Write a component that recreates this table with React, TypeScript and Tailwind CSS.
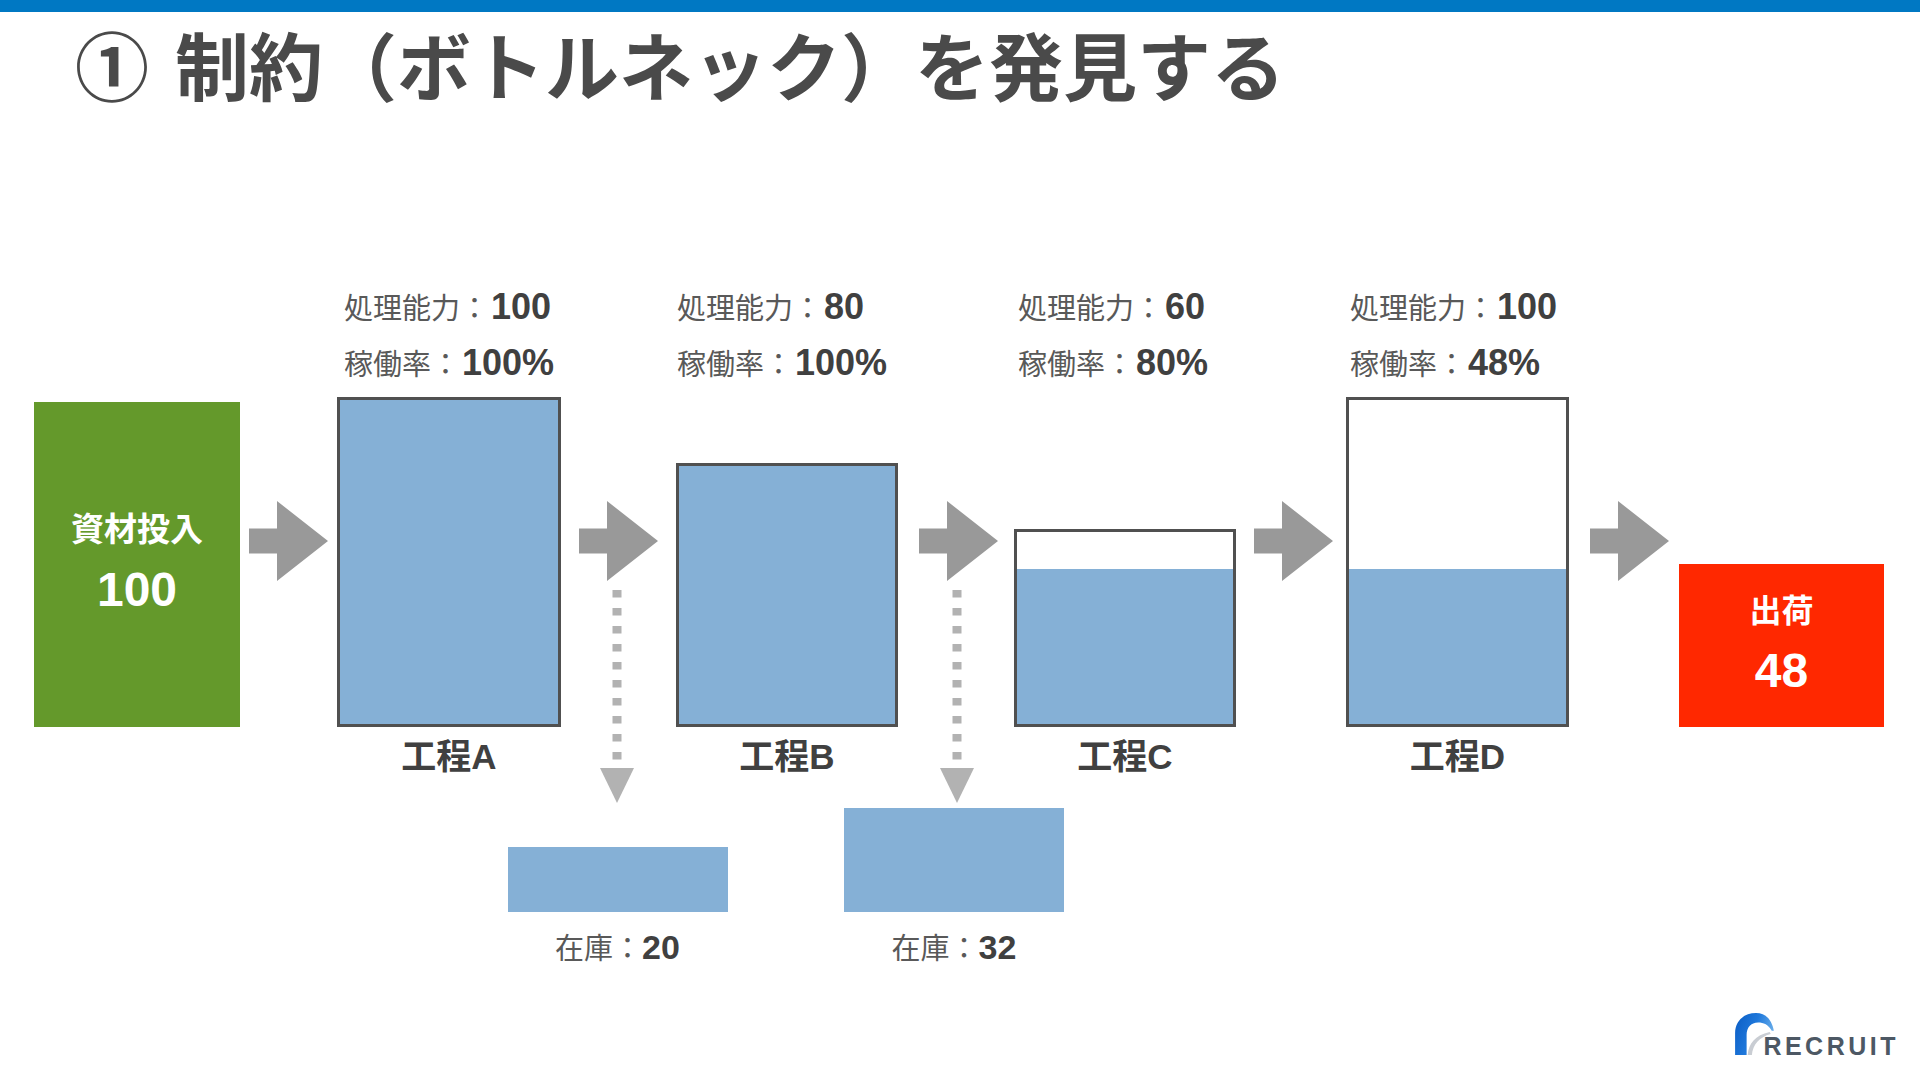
import React from "react";

const SCALE = 3.3;

function Arrow() {
  return (
    <svg width="79" height="80" viewBox="0 0 79 80" className="block shrink-0">
      <polygon points="0,27.5 28,27.5 28,0 79,40 28,80 28,52.5 0,52.5" fill="#999999" />
    </svg>
  );
}

function ArrowCol({ className, stock, boxClass }: { className: string; stock?: number; boxClass?: string }) {
  return (
    <div className={"flex flex-col items-center w-[79px] shrink-0 pt-[222px] " + className}>
      <Arrow />
      {stock !== undefined && (
        <>
          <svg width="10" height="170" viewBox="0 0 10 170" className="block mt-[9px] mr-[3px] shrink-0">
            <line x1="5" y1="0" x2="5" y2="170" stroke="#b2b2b2" strokeWidth="9" strokeDasharray="7.5 10.5" />
          </svg>
          <svg width="34" height="35" viewBox="0 0 34 35" className="block mt-[8px] mr-[3px] shrink-0">
            <polygon points="0,0 34,0 17,35" fill="#b2b2b2" />
          </svg>
          <div className={"h-[109px] flex flex-col justify-end items-center " + (boxClass ?? "")}>
            <div className="w-[220px] shrink-0 bg-[#85b0d6]" style={{ height: stock * 3.25 }} />
            <div className="mt-[15px] h-[40px] leading-[40px] whitespace-nowrap text-[#595959] font-['Liberation_Sans','Noto_Sans_CJK_JP',sans-serif] -mb-[55px]">
              <span className="text-[29px]">在庫：</span>
              <span className="text-[34px] font-bold text-[#404040]">{stock}</span>
            </div>
          </div>
        </>
      )}
    </div>
  );
}

function Process({
  className,
  labelClass,
  cap,
  rate,
  out,
  name,
}: {
  className: string;
  labelClass: string;
  cap: number;
  rate: number;
  out: number;
  name: string;
}) {
  const boxH = cap * SCALE;
  const inner = boxH - 6;
  const fillH = Math.min(out * SCALE - 3, inner);
  return (
    <div className={"flex flex-col shrink-0 " + className}>
      <div className="h-[448px] flex flex-col">
        <div className={"font-['Liberation_Sans','Noto_Sans_CJK_JP',sans-serif] text-[#595959] " + labelClass}>
          <div className="h-[56px] leading-[56px] whitespace-nowrap">
            <span className="text-[29px]">処理能力：</span>
            <span className="ml-[2px] text-[36px] font-bold text-[#404040]">{cap}</span>
          </div>
          <div className="h-[56px] leading-[56px] whitespace-nowrap">
            <span className="text-[29px]">稼働率：</span>
            <span className="ml-[2px] text-[36px] font-bold text-[#404040]">{rate}%</span>
          </div>
        </div>
        <div className="flex-1" />
        <div
          className="w-full border-[3px] border-[#505050] bg-white flex flex-col justify-end"
          style={{ height: boxH }}
        >
          <div className="bg-[#85b0d6]" style={{ height: fillH }} />
        </div>
      </div>
      <div className="mt-[10px] h-[40px] leading-[40px] text-center whitespace-nowrap text-[35px] font-bold text-[#404040] font-['Liberation_Sans','Noto_Sans_CJK_JP',sans-serif]">
        {name}
      </div>
    </div>
  );
}

function Logo() {
  return (
    <div className="flex items-start">
      <svg width="42" height="44" viewBox="0 0 40 42" className="block shrink-0 -mt-[2px]">
        <defs>
          <linearGradient id="rg" x1="0" y1="0" x2="1" y2="0.4">
            <stop offset="0" stopColor="#0a5cc4" />
            <stop offset="0.55" stopColor="#1f78db" />
            <stop offset="1" stopColor="#6aaeea" />
          </linearGradient>
        </defs>
        <path d="M13 41 C14 30 20 22 34 19 L35 21 C24 24 18 31 17 41 Z" fill="#c9cdd3" />
        <path
          d="M1 41 L1 20 C1 9 9 1 21 1 C30 1 36 7 38 18 L36 18 C33 12 28 10 23 10 C16 10 12 15 12 22 L12 41 Z"
          fill="url(#rg)"
        />
      </svg>
      <div className="ml-[-13px] mt-[20px] h-[25px] leading-[25px] text-[25px] font-bold tracking-[3.5px] text-[#4d5864] font-['Liberation_Sans',sans-serif]">
        RECRUIT
      </div>
    </div>
  );
}

export default function App() {
  return (
    <div className="w-[1920px] h-[1080px] bg-white flex flex-col overflow-hidden">
      <div className="h-[12px] shrink-0 bg-[#0078c3]" />
      <h1 className="mt-[11px] pl-[75px] h-[80px] leading-[80px] text-[74px] font-bold text-[#4a4a4a] font-['Noto_Sans_CJK_JP',sans-serif] whitespace-nowrap flex shrink-0">
        <span>①</span>
        <span className="ml-[26px]">制約（ボトルネック）を発見する</span>
      </h1>

      <div className="mt-[176px] flex items-start shrink-0">
        {/* 資材投入 */}
        <div className="ml-[34px] w-[206px] shrink-0 pt-[123px]">
          <div className="h-[325px] bg-[#64992b] flex flex-col items-center pt-[108px] text-white font-bold font-['Liberation_Sans','Noto_Sans_CJK_JP',sans-serif]">
            <div className="h-[40px] leading-[40px] text-[33px] whitespace-nowrap">資材投入</div>
            <div className="mt-[12px] h-[56px] leading-[56px] text-[48px]">100</div>
          </div>
        </div>

        <ArrowCol className="ml-[9px]" />
        <Process className="ml-[9px] w-[224px]" labelClass="pl-[7px]" cap={100} rate={100} out={100} name="工程A" />
        <ArrowCol className="ml-[18px]" stock={20} boxClass="mr-[2px]" />
        <Process className="ml-[18px] w-[222px]" labelClass="pl-[1px]" cap={80} rate={100} out={80} name="工程B" />
        <ArrowCol className="ml-[21px]" stock={32} boxClass="mr-[9px]" />
        <Process className="ml-[16px] w-[222px]" labelClass="pl-[4px]" cap={60} rate={80} out={48} name="工程C" />
        <ArrowCol className="ml-[18px]" />
        <Process className="ml-[13px] w-[223px]" labelClass="pl-[4px]" cap={100} rate={48} out={48} name="工程D" />
        <ArrowCol className="ml-[21px]" />

        {/* 出荷 */}
        <div className="ml-[10px] w-[205px] shrink-0 pt-[285px]">
          <div className="h-[163px] bg-[#ff2800] flex flex-col items-center pt-[27px] text-white font-bold font-['Liberation_Sans','Noto_Sans_CJK_JP',sans-serif]">
            <div className="h-[40px] leading-[40px] text-[32px] whitespace-nowrap">出荷</div>
            <div className="mt-[12px] h-[56px] leading-[56px] text-[48px]">48</div>
          </div>
        </div>
      </div>

      <div className="flex-1" />
      <div className="flex justify-end pr-[21px] pb-[21px] shrink-0">
        <Logo />
      </div>
    </div>
  );
}
